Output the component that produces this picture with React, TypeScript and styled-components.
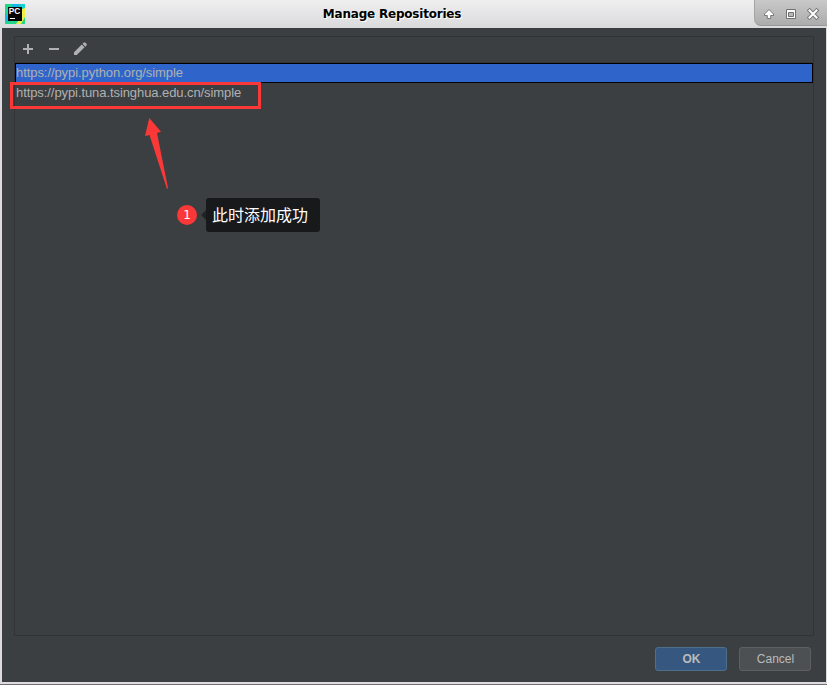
import React from "react";
import styled, { createGlobalStyle } from "styled-components";

const Global = createGlobalStyle`
  * { box-sizing: border-box; }
  body { margin: 0; background: #3c3f41; overflow: hidden; }
`;

const Window = styled.div`
  position: relative;
  display: flex;
  flex-direction: column;
  width: 827px;
  height: 685px;
  border-bottom: 1px solid #737074;
  background: #dedae0;
  font-family: "Liberation Sans", Arial, sans-serif;
`;

const TitleBar = styled.header`
  display: flex;
  flex: none;
  height: 28px;
  padding-left: 5px;
  background: linear-gradient(#efeff0, #dad9db);
`;

const AppIcon = styled.svg`
  flex: none;
  width: 20px;
  height: 20px;
  margin-top: 4px;
`;

const Title = styled.h1`
  flex: 1;
  margin: 0;
  padding-left: 5px;
  font: bold 12px/28px "DejaVu Sans", sans-serif;
  letter-spacing: -0.21px;
  color: #000;
  text-align: center;
  text-shadow: 1px 1px 0 #fff;
`;

const WindowControls = styled.div`
  display: flex;
  width: 73px;
  height: 26px;
  padding: 7px 0 0 8px;
  gap: 8px;
  border-left: 1px solid #a5a5a5;
  border-bottom: 1px solid #989898;
  border-bottom-left-radius: 7px;
  background: linear-gradient(#c9c9ca, #acacad);
`;

const ControlIcon = styled.svg`
  flex: none;
  width: 14px;
  height: 14px;
`;

const Content = styled.main`
  display: flex;
  flex: 1;
  flex-direction: column;
  margin: 0 1px 2px 2px;
  padding: 8px 12px 11px;
  background: #3c3f41;
`;

const Panel = styled.section`
  width: 800px;
  height: 600px;
  border: 1px solid #323335;
`;

const Toolbar = styled.div`
  display: flex;
  height: 26px;
  padding: 4px 0 0 5px;
  gap: 10px;
  border-bottom: 1px solid #343638;
`;

const ToolIcon = styled.svg`
  width: 16px;
  height: 16px;
  color: #afb1b3;
`;

const RepositoryRow = styled.div<{ $selected?: boolean }>`
  height: 20px;
  border: 1px solid ${(p) => (p.$selected ? "#000" : "transparent")};
  background: ${(p) => (p.$selected ? "#2f65ca" : "transparent")};
  color: #b0b1b1;
  font-size: 13px;
  line-height: 18px;
  letter-spacing: ${(p) => (p.$selected ? "-0.07px" : "-0.08px")};
`;

const Actions = styled.footer`
  display: flex;
  justify-content: flex-end;
  gap: 12px;
  margin-top: 11px;
  padding-right: 3px;
`;

const Button = styled.button<{ $primary?: boolean }>`
  width: 72px;
  height: 24px;
  padding: 0 0 0 1px;
  border: 1px solid ${(p) => (p.$primary ? "#4c708c" : "#5e6060")};
  border-radius: 3px;
  background: ${(p) => (p.$primary ? "#365880" : "#4c5052")};
  color: #bbbbbb;
  font: ${(p) => (p.$primary ? "bold" : "normal")} 12px/21px "Liberation Sans", Arial, sans-serif;
`;

const Highlight = styled.div`
  position: absolute;
  left: 10px;
  top: 82px;
  width: 251px;
  height: 27px;
  border: 3px solid #fb3838;
`;

const Arrow = styled.svg`
  position: absolute;
  left: 144px;
  top: 117px;
  width: 26px;
  height: 73px;
`;

const Callout = styled.div`
  position: absolute;
  left: 177px;
  top: 198px;
  display: flex;
  align-items: center;
`;

const StepBadge = styled.span`
  width: 20px;
  height: 20px;
  border-radius: 50%;
  background: #fb3838;
  color: #fff;
  font: 12px/20px "DejaVu Sans", sans-serif;
  text-align: center;
`;

const Pointer = styled.span`
  margin-left: 4px;
  border: 5px solid transparent;
  border-left: 0;
  border-right-color: #202224;
`;

const Note = styled.span`
  width: 114px;
  height: 34px;
  padding-left: 6px;
  border-radius: 3px;
  background: #18191b;
  color: #fff;
  font: 16px/33px "Noto Sans CJK SC", sans-serif;
`;

const repositories = [
  "https://pypi.python.org/simple",
  "https://pypi.tuna.tsinghua.edu.cn/simple",
];

function PyCharmIcon() {
  return (
    <AppIcon viewBox="0 0 20 20">
      <path fill="#21d789" d="M0 0h20v20H0z" />
      <path fill="#14b8e4" d="M7 0h7l3 4v3H7zM0 8l5 9-3 1-2-2z" />
      <path fill="#19cfc9" d="M14 0h6v5l-3 3z" />
      <path fill="#f0ee45" d="m17 5 3-1v9l-4 7h-5l3-4 3-1z" />
      <path fill="#050505" d="M3 3h14v14H3z" />
      <text x="3.8" y="10.4" fill="#fff" fontFamily="Liberation Sans" fontSize="8.3" fontWeight="700" textLength="11.5">PC</text>
      <path fill="#fff" d="M5 14h5v1H5z" />
    </AppIcon>
  );
}

export default function App() {
  return (
    <>
      <Global />
      <Window>
        <TitleBar>
          <PyCharmIcon />
          <Title>Manage Repositories</Title>
          <WindowControls>
            <ControlIcon viewBox="0 0 14 14">
              <path d="M6 2.5 1.5 7v1.5h2.8v3h3.4v-3h2.8V7z" fill="#fff" stroke="#777" />
            </ControlIcon>
            <ControlIcon viewBox="0 0 14 14">
              <path d="M1.5 2.5h9v9h-9z" fill="#fff" stroke="#707070" />
              <path d="M3.5 5.5h5v4h-5z" fill="#b8b8b8" stroke="#707070" />
            </ControlIcon>
            <ControlIcon viewBox="0 0 14 14">
              <path d="m2.5 3.5 7 7m0-7-7 7" stroke="#777" strokeWidth="4" strokeLinecap="square" />
              <path d="m2.5 3.5 7 7m0-7-7 7" stroke="#fff" strokeWidth="2" strokeLinecap="square" />
            </ControlIcon>
          </WindowControls>
        </TitleBar>
        <Content>
          <Panel>
            <Toolbar>
              <ToolIcon viewBox="0 0 16 16"><path fill="currentColor" d="M7 3h2v4h4v2H9v4H7V9H3V7h4z" /></ToolIcon>
              <ToolIcon viewBox="0 0 16 16"><path fill="currentColor" d="M3 7h10v2H3z" /></ToolIcon>
              <ToolIcon viewBox="0 0 16 16"><path fill="currentColor" d="m2 11.3 7.8-7.8 2.8 2.8-7.8 7.8H2zM10.5 2.8l1.1-1.1q.9-.8 1.8 0l1.1 1.1q.8.9 0 1.8l-1.1 1.1z" /></ToolIcon>
            </Toolbar>
            {repositories.map((url, i) => (
              <RepositoryRow key={url} $selected={i === 0}>{url}</RepositoryRow>
            ))}
          </Panel>
          <Actions>
            <Button $primary>OK</Button>
            <Button>Cancel</Button>
          </Actions>
        </Content>
        <Highlight />
        <Arrow viewBox="0 0 26 73">
          <path fill="#fb3838" d="M5.3 1 17 14.8 13 16 24 71l-1 1L5.5 18 1 19z" />
        </Arrow>
        <Callout>
          <StepBadge>1</StepBadge>
          <Pointer />
          <Note>此时添加成功</Note>
        </Callout>
      </Window>
    </>
  );
}
